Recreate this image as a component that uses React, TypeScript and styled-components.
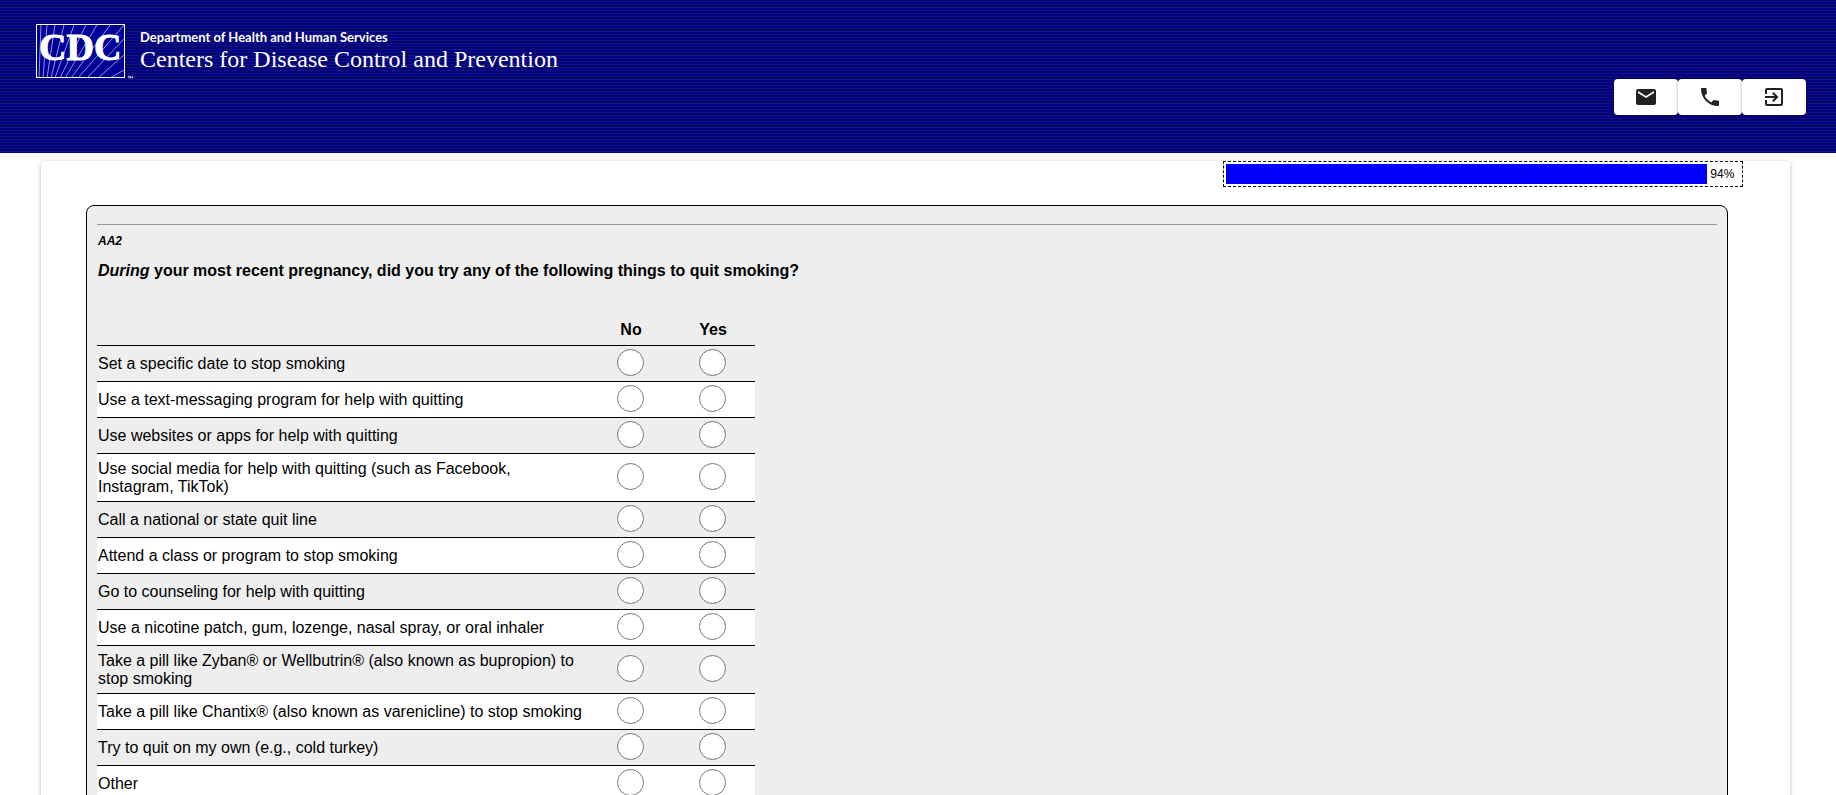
import React from "react";
import styled, { createGlobalStyle } from "styled-components";
import { MdEmail, MdPhone, MdExitToApp } from "react-icons/md";

const GlobalStyle = createGlobalStyle`
  *, *::before, *::after { box-sizing: border-box; }
  body {
    margin: 0;
    background: #fff;
    color: #000;
    font-family: Arial, "Liberation Sans", sans-serif;
    font-size: 16px;
    line-height: 18px;
  }
`;

const Header = styled.header`
  display: flex;
  justify-content: space-between;
  align-items: flex-start;
  height: 153px;
  padding: 24px 30px 0 36px;
  background: repeating-linear-gradient(to bottom, #000088 0 1px, #14146c 1px 2px, #000080 2px 3px);
`;

const Brand = styled.a`
  display: flex;
  color: #fff;
  text-decoration: none;
`;

const Logo = styled.svg`
  width: 97px;
  height: 55px;
`;

const BrandText = styled.span`
  display: flex;
  flex-direction: column;
  padding: 4px 0 0 7px;
`;

const Department = styled.span`
  font: 700 13px/18px Lato, sans-serif;
`;

const Agency = styled.span`
  font: 400 24px/26px "Liberation Serif", serif;
`;

const Actions = styled.nav`
  display: flex;
  padding-top: 55px;
`;

const ActionButton = styled.button`
  display: flex;
  align-items: center;
  justify-content: center;
  width: 64px;
  height: 36px;
  padding: 0;
  border: 0;
  border-radius: 4px;
  background: #fff;
  color: #222;
  font-size: 24px;
  box-shadow: 0 1px 3px rgba(0, 0, 0, 0.35);
`;

const Card = styled.main`
  display: flex;
  flex-direction: column;
  margin: 8px 46px 0 41px;
  padding: 0 62px 44px 45px;
  border-radius: 4px;
  box-shadow: 0 1px 4px rgba(0, 0, 0, 0.3);
`;

const ProgressFrame = styled.div`
  display: flex;
  align-items: center;
  align-self: flex-end;
  gap: 3px;
  width: 520px;
  height: 26px;
  margin-right: -15px;
  padding: 2px 4px 2px 2px;
  border: 1px dashed #000;
  font-size: 12px;
`;

const ProgressFill = styled.div`
  height: 20px;
  background: #00f;
`;

const Question = styled.form`
  margin-top: 18px;
  padding: 18px 10px 40px;
  border: 1px solid #000;
  border-radius: 8px;
  background: #eee;
`;

const Rule = styled.hr`
  height: 1px;
  margin: 0;
  border: 0;
  background: #999;
`;

const Code = styled.p`
  margin: 7px 0 0 1px;
  font-size: 12px;
  font-style: italic;
  font-weight: 700;
`;

const Prompt = styled.h1`
  margin: 12px 0 0 1px;
  font-size: 16px;
  line-height: 18px;
`;

const Grid = styled.table`
  width: 658px;
  margin-top: 41px;
  border-collapse: collapse;
  table-layout: fixed;
`;

const AnswerHead = styled.th`
  width: 82px;
  padding: 0 2px 6px 0;
  font-weight: 700;
`;

const Row = styled.tr`
  border-top: 1px solid #000;
  &:nth-child(even) { background: #fff; }
`;

const Label = styled.th`
  padding: 6px 5px 5px 1px;
  font-weight: 400;
  text-align: left;
`;

const Answer = styled.td`
  height: 36px;
  padding: 0 3px 0 0;
  text-align: center;
`;

const Radio = styled.input`
  appearance: none;
  display: block;
  width: 27px;
  height: 27px;
  margin: 0 auto 2px;
  border: 1px solid #767676;
  border-radius: 50%;
  background: #fff;
  &:checked { box-shadow: inset 0 0 0 5px #fff; background: #00f; }
`;

const items = [
  "Set a specific date to stop smoking",
  "Use a text-messaging program for help with quitting",
  "Use websites or apps for help with quitting",
  "Use social media for help with quitting (such as Facebook, Instagram, TikTok)",
  "Call a national or state quit line",
  "Attend a class or program to stop smoking",
  "Go to counseling for help with quitting",
  "Use a nicotine patch, gum, lozenge, nasal spray, or oral inhaler",
  "Take a pill like Zyban® or Wellbutrin® (also known as bupropion) to stop smoking",
  "Take a pill like Chantix® (also known as varenicline) to stop smoking",
  "Try to quit on my own (e.g., cold turkey)",
  "Other",
];

const answers = ["No", "Yes"];
const progress = 94;

export default function App() {
  return (
    <>
      <GlobalStyle />
      <Header>
        <Brand href="#">
          <Logo viewBox="0 0 97 55" aria-hidden="true">
            <rect x="0.5" y="0.5" width="88" height="53" fill="#000099" stroke="#fff" />
            <path
              d="M3 54 5 1M7 54 11 1M11 54 19 1M15 54 28 1M19 54 38 1M24 54 50 1M29 54 61 1M35 54 74 1M42 54 88 1M51 54 88 15M62 54 88 31M74 54 88 46"
              stroke="#b8b8e6"
              strokeWidth="0.8"
              fill="none"
            />
            <text x="3" y="36" fill="#fff" stroke="#fff" fontFamily="Liberation Serif, serif" fontWeight="700" fontSize="38">CDC</text>
            <path d="M92 52.5h2M93 52.5v2M94.5 54.5v-2l1 1 1-1v2" stroke="#fff" strokeWidth="0.7" fill="none" />
          </Logo>
          <BrandText>
            <Department>Department of Health and Human Services</Department>
            <Agency>Centers for Disease Control and Prevention</Agency>
          </BrandText>
        </Brand>
        <Actions>
          <ActionButton type="button" aria-label="Email"><MdEmail /></ActionButton>
          <ActionButton type="button" aria-label="Phone"><MdPhone /></ActionButton>
          <ActionButton type="button" aria-label="Exit"><MdExitToApp /></ActionButton>
        </Actions>
      </Header>
      <Card>
        <ProgressFrame>
          <ProgressFill style={{ width: `${progress}%` }} />
          <span>{progress}%</span>
        </ProgressFrame>
        <Question>
          <Rule />
          <Code>AA2</Code>
          <Prompt><em>During</em> your most recent pregnancy, did you try any of the following things to quit smoking?</Prompt>
          <Grid>
            <thead>
              <tr>
                <td />
                {answers.map((a) => <AnswerHead key={a} scope="col">{a}</AnswerHead>)}
              </tr>
            </thead>
            <tbody>
              {items.map((item, i) => (
                <Row key={item}>
                  <Label scope="row">{item}</Label>
                  {answers.map((a) => (
                    <Answer key={a}>
                      <Radio type="radio" name={`item-${i}`} value={a} aria-label={`${item}: ${a}`} />
                    </Answer>
                  ))}
                </Row>
              ))}
            </tbody>
          </Grid>
        </Question>
      </Card>
    </>
  );
}
